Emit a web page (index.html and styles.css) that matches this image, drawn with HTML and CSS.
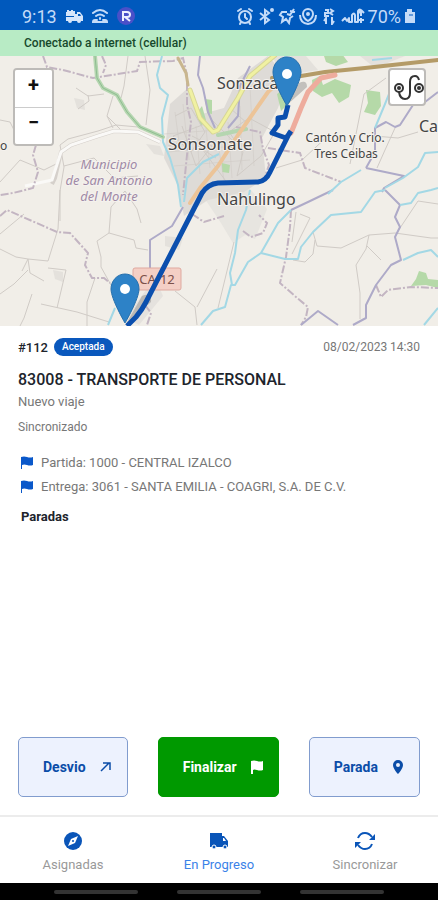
FILE: index.html
```html
<!DOCTYPE html>
<html lang="es">
<head>
    <meta charset="UTF-8">
    <meta name="viewport" content="width=device-width, initial-scale=1.0">
    <title>Viaje #112</title>
    <link rel="stylesheet" href="styles.css">
</head>
<body>
    <header class="status-bar">
        <div class="status-left">
            <span class="clock">9:13</span>
            <svg width="18" height="16" viewBox="0 0 18 16" fill="#d5e5fb">
                <path d="M2 2h2v1h2V2h2v1h2v3h2V4h3l3 4v5h-2a2 2 0 0 1-4 0H7a2 2 0 0 1-4 0H1V9h8V8H1V4h1z"/>
                <path d="M13 6h2l1 2h-3z" fill="#0059bd"/>
            </svg>
            <svg width="18" height="16" viewBox="0 0 18 16" fill="none" stroke="#c4dbf8" stroke-width="2" stroke-linecap="round">
                <path d="M2 5q7-6 14 0M5 8q4-3 8 0M9 10v1M6 12H4a2 2 0 0 0-2 2h14a2 2 0 0 0-2-2h-2"/>
            </svg>
            <svg width="18" height="18" viewBox="0 0 18 18">
                <circle cx="9" cy="9" r="9" fill="#4a50c8"/>
                <path d="M6 14V5h4q3 0 3 2.500T10 10H8l5 4" fill="none" stroke="#eef0ff" stroke-width="2"/>
            </svg>
        </div>
        <div class="status-right">
            <svg width="18" height="18" viewBox="0 0 18 18" fill="none" stroke="#c4dbf8" stroke-width="2" stroke-linecap="round">
                <circle cx="9" cy="10" r="6"/><path d="M9 7v3l2 2M2 4l3-2M16 4l-3-2M5 15l-1 2M13 15l1 2"/>
            </svg>
            <svg width="18" height="18" viewBox="0 0 18 18" fill="none" stroke="#c4dbf8" stroke-width="2">
                <path d="M3 6l9 7-4 3V3l4 3-9 7"/><circle cx="15" cy="3" r="1"/>
            </svg>
            <svg width="18" height="18" viewBox="0 0 18 18" fill="none" stroke="#c4dbf8" stroke-width="2">
                <path d="M9 5H4L2 8l3 2-1 5 4-3 3 4 1-5 3-2M9 7l3 1 4-6M12 4l5 1"/>
            </svg>
            <svg width="18" height="18" viewBox="0 0 18 18" fill="none" stroke="#c4dbf8" stroke-width="2">
                <path d="M9 14Q4 11 4 7a5 5 0 0 1 10 0q0 4-5 7zM1 8q0 8 8 9 8-1 8-9"/><circle cx="9" cy="7" r="1"/>
            </svg>
            <svg width="18" height="18" viewBox="0 0 18 18" fill="none" stroke="#c4dbf8" stroke-width="2">
                <path d="M5 3h3v3H5v3h4M10 2l3 2-3 2 3 2M6 17v-6l-2 3M12 10v7l2-3"/>
            </svg>
            <svg width="24" height="18" viewBox="0 0 24 18" fill="none" stroke="#c4dbf8" stroke-width="2" stroke-linejoin="round">
                <path d="M1 14l3-3 2 3 2-3v4h3V8q2-3 3 0v7h3V4q2-3 3 0v5M18 6l2-3 3 3M18 13h5M20 11v5"/>
            </svg>
            <span class="battery">70%</span>
            <svg width="12" height="18" viewBox="0 0 12 18" fill="#c4dbf8">
                <path d="M1 5h2V2h5v3h3v11H1z"/><path d="M5 8h4" stroke="#0059bd"/>
            </svg>
        </div>
    </header>
    <div class="connection">Conectado a internet (cellular)</div>

    <main>
        <section class="map">
            <svg class="map-canvas" viewBox="0 0 438 270" preserveAspectRatio="xMidYMid slice">
                <rect width="438" height="270" fill="#f1eee8"/>
                <!-- urban areas -->
                <g fill="#dedbd7">
                    <path d="M170 48l18-16 14 26 22-6 14-30 30-22 20 22-10 30-16 30 4 40-22 14-36 8-24 16-6-30-14-28z"/>
                    <path d="M205 143l40-16 22 26-12 30-10-4-12 8-12-20z" opacity=".5"/>
                    <path d="M74 42l10 2 1 10-8-2zM146 88l14 2 4 10-10-2zM53 214l10 2v10l-8-3zM165 180l18 2-4 12-14-4z" opacity=".7"/>
                    <path d="M272 0h34l12 14-36 6zM360 0h45l-30 12z" opacity=".7"/>
                    <path d="M125 262l30-40 8 18-24 29z" opacity=".6"/>
                </g>
                <!-- woods -->
                <g fill="#b5d9a8">
                    <path d="M324 0l18-2 6 8-12 4-10-4zM312 24l8-4 3 9 12-6 16 6-2 12-10 6-7-10-10 4-9-6zM366 34l14 2 1 14-6 9-11-3 4-9zM196 58l6-8 4 14-5 6zM205 43l7 1v14l-5-1zM277 38l8-6 5 14-9 9zM222 107l8 2-1 8-7-1z"/>
                    <path d="M411 230l5-7 3-8 7 2 2 6 10 1v8l-12-3z"/>
                </g>
                <!-- minor roads -->
                <g fill="none" stroke="#d0cbc6" stroke-width="1">
                    <path d="M0 64l10 2 5 10M76 32l12 8 16-2M78 53l11-8-1-6M113 40l-6 20 6 12M107 60l14 14M128 0l-4 30-3 12M145 0l5 34-4 35M60 89l8-6 30-8 18-6 22 2 22 10M60 89l4 22-4 24v30M0 126l20-22 24 10 16-8M64 110l30-8 20 20 24-2"/>
                    <path d="M0 178l24-20M0 193l16 8 12 2 20 2 10-32 2-39M28 203l2 14 14 8M28 203l-6 12M0 238l14-10 14-14M48 212l18 2-9 38M41 248l36 8 32 10M32 238l-8 24-4 8M97 185l12-8 25 7 2 8 12 2M97 185l4 16 0 10 10 18M109 177l2-26 14-16 12 18 4 14M95 222l-8 24v24M175 235l20 16 2 18M197 251l20-38"/>
                    <path d="M218 252l16-66M313 176l4 14 24 2 28-13 26-2 36 5h7M398 175l20-30 20 3M369 179l-3 14-10 16 4 28v26M367 190l14 14M296 156l-4 30M300 158l10 4-18 36M293 204l12 2 8-8 2-14M395 72l-10 22-8 18M374 80l24 2 20-6M350 108l14-70 22-16M276 112l26-8 28-26M237 120l6-24-14-20 20-14 26 14-14 24zM175 60l16-8 14 24-14 20-18-16 32-12M182 70l14 40 16-20-20-10M168 90l20-6 28 18M210 62l24 24M230 52l18 16M200 90l28 38"/>
                    <path d="M175 56l5 38M183 48l6 56M196 70l4 48M206 72l4 40M218 88l6 36M228 66l4 56M240 50l2 64M250 30l4 80M164 78l54-4M168 96l66-6M174 110l76-6" opacity=".6"/>
                </g>
                <path d="M52 128l3-6 6-26 10-7 27-9 16-5 24 1 22 10" fill="none" stroke="#d5d0cb" stroke-width="4"/>
                <path d="M25 130l27-6 9-28 10-7 27-9 16-5 24 1 22 10" fill="none" stroke="#faf9f7" stroke-width="3"/>
                <!-- administrative boundaries -->
                <g fill="none" stroke="#c3b5c2" stroke-width="2" stroke-dasharray="8 2 2 2">
                    <path d="M43 0l4 11 16 3 30 8 44-7 3-9 33-1 10-3 4 17v30l4 17-4 33-4 40M102 0l4 9-3 8M36 89l-3 10 5 17-5 16-20 5-13 2M0 160l7-6 50 22 13 1 18 20-3 12 7 13h12l6 5"/>
                    <path d="M236 71l24 5 3 17 6 16-6 17M268 92l32 5 5 15 36 14M291 154l-1 17-4 30-6 26 16 14 12 10-2 10-5 8M376 229l5 12 7-7 23-3 27 1M243 175l8 6 12-4 4-10-8-8M192 158l12 8 20-6M145 249l6 8-4 12"/>
                </g>
                <g fill="none" stroke="#aeaac8" stroke-width="2" stroke-linejoin="round">
                    <path d="M200 0l-2 19 5 13 5 24 7 16M250 10l-10 20-2 30-10 12M438 36l-13 10-12 3-13 20-5 2-9-5-11 6v24l-9 16M366 112l38 8-20 12-2 4"/>
                    <path d="M333 134l-25 12-17 8M385 134l15 15-5 12 5 10-5 10 6 23-10 5-15 20-10 20v13l-13 7M301 269l17-14 20 14M183 151l-11 19-22 14v28"/>
                </g>
                <!-- rivers -->
                <g fill="none" stroke="#a3d8e5" stroke-width="2" stroke-linejoin="round">
                    <path d="M162 0l-5 19 3 13 8 7-6 23 1 24 7 16 8 27 3 22M184 146l3-24 16-16 16-8M375 72l10-24 8-20M438 96l-13 1-7 14-15 11-18 10M361 114l-20 12-13 12M286 0l-10 12M372 4l20-2"/>
                    <path d="M291 154l-13 13-17 30-13 9-13 23h-4l-6 22-12 4-12 14M250 134l-4 20-8 20-3 23-5 20 2 12M261 197l24 6h13l3-12 12-15 18-17 30-3 14-20 10-2M400 149l11-2 7-10 13-3 7-2M403 204l15-7 13-3 7 7M438 252l-14 17M115 252l-7 17"/>
                </g>
                <!-- main roads -->
                <g fill="none" stroke-linecap="round" stroke-linejoin="round">
                    <path d="M95 0l2 22 6 10 14 7 10 17 13 15 23 10M218 79l28-6" stroke="#b5d6b0" stroke-width="4"/>
                    <path d="M95 0l2 22 6 10 14 7 10 17 13 15 23 10" stroke="#8fbd91" stroke-width="1"/>
                    <path d="M190 34l10 28 13 14 5-2 20-32 12-22 25-21" stroke="#d7d695" stroke-width="5"/>
                    <path d="M190 34l10 28 13 14 5-2 20-32 12-22 25-21" stroke="#f0f1a2" stroke-width="3"/>
                    <path d="M178 2l8 15 2 12" stroke="#c9b68e" stroke-width="3"/>
                    <path d="M190 147l10-15 18-22 20-31 30-43 17-16" stroke="#ecc498" stroke-width="4"/>
                    <path d="M272 22l29-2 24-4 40-4 73-8" stroke="#b49b67" stroke-width="4"/>
                    <path d="M291 77l10-25 7-16 13-14 14-3" stroke="#eeac9d" stroke-width="5"/>
                </g>
                <rect x="133" y="212" width="48" height="22" rx="2" fill="#f4cfc5" stroke="#dfa9a0"/>
                <g class="map-labels">
                    <text x="217" y="33" class="town">Sonzaca</text>
                    <text x="168" y="94" class="city">Sonsonate</text>
                    <text x="217" y="149" class="town">Nahulingo</text>
                    <text x="419" y="76" class="town">Ca</text>
                    <text x="0" y="94" class="place">o</text>
                    <text x="345" y="86" class="place" text-anchor="middle">Cantón y Crio.</text>
                    <text x="346" y="102" class="place" text-anchor="middle">Tres Ceibas</text>
                    <text x="109" y="113" class="region" text-anchor="middle">Municipio</text>
                    <text x="109" y="129" class="region" text-anchor="middle">de San Antonio</text>
                    <text x="109" y="145" class="region" text-anchor="middle">del Monte</text>
                    <text x="157" y="228" class="shield" text-anchor="middle">CA-12</text>
                </g>
                <!-- pin shadows -->
                <g fill="#555" opacity=".3">
                    <path d="M287 49l12-22q8-4 8 4zM126 268l16-28q10-4 9 6z"/>
                </g>
                <path class="route" d="M288 49l-3 12-7 1v7l-6 8 14 5 3-4-19 38q-4 9-12 10l-40 1q-10 1-16 10l-56 109q-4 8-10 15l-9 9"/>
                <path class="route" d="M289 78l2-3"/>
                <g class="pin" transform="translate(272 1)">
                    <path d="M15 0C7 0 1 7 1 15c0 10 14 34 14 34s14-24 14-34C29 7 23 0 15 0z"/>
                    <circle cx="15" cy="17" r="5"/>
                </g>
                <g class="pin" transform="translate(110 218)">
                    <path d="M15 0C7 0 1 7 1 15c0 10 14 34 14 34s14-24 14-34C29 7 23 0 15 0z"/>
                    <circle cx="15" cy="15" r="5"/>
                </g>
            </svg>
            <div class="zoom-control">
                <button type="button" aria-label="Acercar">+</button>
                <button type="button" aria-label="Alejar">−</button>
            </div>
            <button type="button" class="route-control" aria-label="Ruta">
                <svg width="34" height="32" viewBox="0 0 34 32" fill="none" stroke="#333" stroke-width="2">
                    <circle cx="9" cy="17" r="4"/><circle cx="29" cy="17" r="4"/>
                    <circle cx="9" cy="17" r="1"/><circle cx="29" cy="17" r="1"/>
                    <path d="M9 21q1 7 6 7 5 0 5-6V11q0-6 5-6 3 0 4 4"/>
                </svg>
            </button>
        </section>

        <section class="trip">
            <div class="trip-head">
                <span class="trip-id">#112</span>
                <span class="badge">Aceptada</span>
                <time class="trip-date" datetime="2023-02-08T14:30">08/02/2023 14:30</time>
            </div>
            <h1>83008 - TRANSPORTE DE PERSONAL</h1>
            <p class="kind">Nuevo viaje</p>
            <p class="sync">Sincronizado</p>
            <ul class="points">
                <li>
                    <svg width="12" height="13" viewBox="0 0 12 13" fill="#0a58ca"><path d="M0 1q3-1 6 0t6 0v8q-3 1-6 0t-5 0v4H0z"/></svg>
                    Partida: 1000 - CENTRAL IZALCO
                </li>
                <li>
                    <svg width="12" height="13" viewBox="0 0 12 13" fill="#0a58ca"><path d="M0 1q3-1 6 0t6 0v8q-3 1-6 0t-5 0v4H0z"/></svg>
                    Entrega: 3061 - SANTA EMILIA - COAGRI, S.A. DE C.V.
                </li>
            </ul>
            <h2>Paradas</h2>
        </section>
    </main>

    <div class="actions">
        <button type="button" class="btn">
            Desvio
            <svg width="14" height="14" viewBox="0 0 14 14" fill="none" stroke="#0b4da8" stroke-width="1.500"><path d="M2 11l8-8M4 3h7v7"/></svg>
        </button>
        <button type="button" class="btn btn-finish">
            Finalizar
            <svg width="14" height="14" viewBox="0 0 14 14" fill="#fff"><path d="M1 1q3-1 6 0t6 0v9q-3 1-6 0t-4 0v4H1z"/></svg>
        </button>
        <button type="button" class="btn">
            Parada
            <svg width="14" height="14" viewBox="0 0 14 14" fill="#0b4da8"><path fill-rule="evenodd" d="M7 0a5 5 0 0 0-5 5c0 4 5 9 5 9s5-5 5-9a5 5 0 0 0-5-5zm0 3a2 2 0 1 1 0 4 2 2 0 0 1 0-4z"/></svg>
        </button>
    </div>

    <nav class="tabs">
        <a href="#asignadas">
            <svg width="20" height="20" viewBox="0 0 20 20"><circle cx="10" cy="10" r="9" fill="#0a55b8"/><path d="M15 5l-3 7-7 3 3-7z" fill="#fff"/><circle cx="10" cy="10" r="1" fill="#0a55b8"/></svg>
            Asignadas
        </a>
        <a href="#progreso" class="active">
            <svg width="20" height="20" viewBox="0 0 20 20" fill="#0a55b8"><path d="M1 2h12v3h2l4 5v6H1z"/><circle cx="5" cy="16" r="2" stroke="#fff"/><circle cx="16" cy="16" r="2" stroke="#fff"/><path d="M14 7h1l2 3h-3z" fill="#fff"/></svg>
            En Progreso
        </a>
        <a href="#sincronizar">
            <svg width="20" height="20" viewBox="0 0 20 20" fill="none" stroke="#0a55b8" stroke-width="2"><path d="M3 7q2-5 7-5 4 0 7 4M17 13q-2 5-7 5-4 0-7-4"/><path d="M20 3v6h-6zM0 17v-6h6z" fill="#0a55b8" stroke="none"/></svg>
            Sincronizar
        </a>
    </nav>
    <div class="system-bar"><span></span><span></span><span></span></div>
</body>
</html>
```
FILE: styles.css
```css
* {
    box-sizing: border-box;
}
body {
    font-family: Roboto, "Liberation Sans", sans-serif;
    background-color: #fff;
    color: #20242c;
    margin: 0;
    min-height: 100vh;
    display: flex;
    flex-direction: column;
}
h1, h2, p, ul {
    margin: 0;
    padding: 0;
}
button {
    font-family: inherit;
    cursor: pointer;
}
svg {
    flex: none;
}

/* status bar */
.status-bar {
    display: flex;
    justify-content: space-between;
    align-items: center;
    height: 30px;
    padding: 2px 22px 0;
    background-color: #0059bd;
    color: #c4dbf8;
    font-size: 18px;
}
.status-left {
    display: flex;
    align-items: center;
    gap: 8px;
}
.status-right {
    display: flex;
    align-items: center;
    gap: 3px;
}
.connection {
    height: 26px;
    padding: 0 24px;
    background-color: #b8ebc5;
    color: #17492c;
    font-size: 12px;
    font-weight: 500;
    line-height: 26px;
}

/* map */
main {
    flex: 1;
}
.map {
    position: relative;
    height: 270px;
    overflow: hidden;
}
.map-canvas {
    display: block;
    width: 100%;
    height: 100%;
}
.map-labels {
    font-family: "Noto Sans", sans-serif;
    fill: #444;
    stroke: #f5f2ee;
    stroke-width: 2px;
    paint-order: stroke;
}
.city {
    font-size: 17px;
}
.town {
    font-size: 16px;
}
.place {
    font-size: 12px;
}
.region {
    font-size: 13px;
    font-style: italic;
    fill: #a08aa6;
}
.shield {
    font-size: 13px;
    fill: #7c514a;
    stroke: none;
}
.route {
    fill: none;
    stroke: #0b4fae;
    stroke-width: 5px;
    stroke-linejoin: round;
}
.pin path {
    fill: #2d82c7;
    stroke: #2670ad;
}
.pin circle {
    fill: #fff;
}
.zoom-control {
    position: absolute;
    top: 12px;
    left: 13px;
    border: 2px solid #bdbbb8;
    border-radius: 4px;
    overflow: hidden;
}
.zoom-control button {
    display: block;
    width: 37px;
    height: 37px;
    padding: 0 0 8px;
    border: none;
    background-color: #fff;
    color: #111;
    font-size: 20px;
    font-weight: 700;
}
.zoom-control button + button {
    border-top: 1px solid #ccc;
}
.route-control {
    position: absolute;
    top: 12px;
    right: 12px;
    display: flex;
    align-items: center;
    justify-content: center;
    width: 38px;
    height: 38px;
    padding: 0;
    border: 2px solid #bdbbb8;
    border-radius: 4px;
    background-color: #fff;
}

/* trip detail */
.trip {
    padding: 11px 18px;
}
.trip-head {
    display: flex;
    align-items: center;
    height: 20px;
    gap: 6px;
}
.trip-id {
    font-size: 13px;
    font-weight: 500;
}
.badge {
    padding: 0 8px;
    border-radius: 9px;
    background-color: #0a58bd;
    color: #fff;
    font-size: 10px;
    font-weight: 500;
    line-height: 18px;
}
.trip-date {
    margin-left: auto;
    color: #777;
    font-size: 12px;
}
.trip h1 {
    margin-top: 13px;
    font-size: 16px;
    font-weight: 500;
    line-height: 20px;
}
.kind {
    margin-top: 2px;
    color: #777;
    font-size: 13px;
    line-height: 20px;
}
.sync {
    margin-top: 5px;
    color: #777;
    font-size: 12px;
    line-height: 20px;
}
.points {
    margin-top: 13px;
    list-style: none;
}
.points li {
    display: flex;
    align-items: center;
    gap: 8px;
    height: 24px;
    padding-left: 3px;
    color: #777;
    font-size: 13px;
}
.trip h2 {
    margin-top: 9px;
    padding-left: 3px;
    font-size: 13px;
    font-weight: 700;
    line-height: 20px;
}

/* action buttons */
.actions {
    display: flex;
    justify-content: space-between;
    padding: 0 18px 18px;
}
.btn {
    display: flex;
    align-items: center;
    gap: 13px;
    height: 60px;
    padding: 0 14px 0 24px;
    border: 1px solid #819cce;
    border-radius: 5px;
    background-color: #edf2fe;
    color: #0b4da8;
    font-size: 14px;
    font-weight: 700;
}
.btn-finish {
    border-color: #009900;
    background-color: #009900;
    color: #fff;
}

/* bottom navigation */
.tabs {
    display: grid;
    grid-template-columns: repeat(3, 1fr);
    height: 68px;
    padding-top: 14px;
    border-top: 2px solid #ececec;
}
.tabs a {
    display: flex;
    flex-direction: column;
    align-items: center;
    gap: 4px;
    color: #999;
    font-size: 13px;
    line-height: 20px;
    text-decoration: none;
}
.tabs .active {
    color: #3b82e8;
}
.system-bar {
    display: flex;
    justify-content: center;
    align-items: center;
    gap: 39px;
    height: 17px;
    background-color: #000;
}
.system-bar span {
    width: 84px;
    height: 4px;
    border-radius: 2px;
    background-color: #333;
}
```
